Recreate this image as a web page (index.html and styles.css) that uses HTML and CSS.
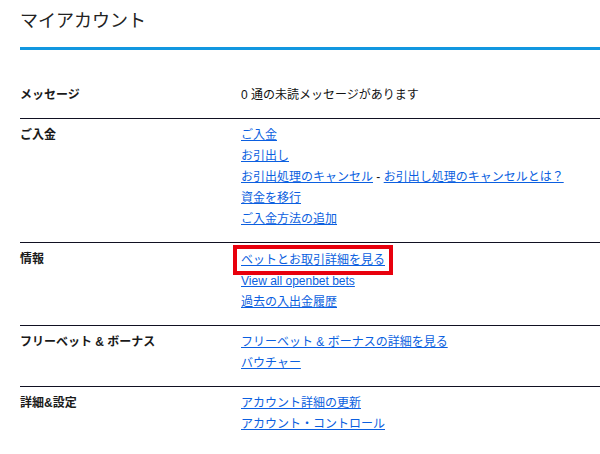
FILE: index.html
```html
<!DOCTYPE html>
<html lang="ja">
<head>
<meta charset="utf-8">
<title>マイアカウント</title>
<link rel="stylesheet" href="styles.css">
</head>
<body>
<div class="page">
  <h1 class="title">マイアカウント</h1>
  <div class="sections">
    <div class="row first">
      <div class="label">メッセージ</div>
      <div class="values"><span class="text">0 通の未読メッセージがあります</span></div>
    </div>
    <div class="row">
      <div class="label">ご入金</div>
      <div class="values">
        <a href="#" class="link">ご入金</a>
        <a href="#" class="link">お引出し</a>
        <div class="line"><a href="#">お引出処理のキャンセル</a><span class="sep">&nbsp;-&nbsp;</span><a href="#">お引出し処理のキャンセルとは？</a></div>
        <a href="#" class="link">資金を移行</a>
        <a href="#" class="link">ご入金方法の追加</a>
      </div>
    </div>
    <div class="row">
      <div class="label">情報</div>
      <div class="values">
        <div class="line-flex"><a href="#" class="highlight">ベットとお取引詳細を見る</a></div>
        <a href="#" class="link">View all openbet bets</a>
        <a href="#" class="link">過去の入出金履歴</a>
      </div>
    </div>
    <div class="row">
      <div class="label">フリーベット &amp; ボーナス</div>
      <div class="values">
        <a href="#" class="link">フリーベット &amp; ボーナスの詳細を見る</a>
        <a href="#" class="link">バウチャー</a>
      </div>
    </div>
    <div class="row">
      <div class="label">詳細&amp;設定</div>
      <div class="values">
        <a href="#" class="link">アカウント詳細の更新</a>
        <a href="#" class="link">アカウント・コントロール</a>
      </div>
    </div>
  </div>
</div>
</body>
</html>
```

FILE: styles.css
```css
html, body {
  margin: 0;
  padding: 0;
  background: #ffffff;
}

body {
  font-family: "Liberation Sans", "Noto Sans CJK JP", sans-serif;
  font-size: 12px;
  color: #111111;
}

.page {
  padding-left: 20px;
}

.title {
  margin: 0;
  padding-top: 9px;
  padding-bottom: 14px;
  font-size: 18px;
  line-height: 24px;
  font-weight: normal;
  color: #222222;
  border-bottom: 3px solid #1297e0;
}

.sections {
  padding-top: 29px;
}

.row {
  display: flex;
  border-top: 1px solid #111122;
  padding: 6px 0 12px 0;
}

.row.first {
  border-top: none;
}

.label {
  width: 221px;
  flex: none;
  font-weight: bold;
  line-height: 21px;
  color: #1a1a1a;
}

.values {
  display: flex;
  flex-direction: column;
  align-items: flex-start;
  line-height: 21px;
}

.values a {
  color: #0b5fe0;
  text-decoration: underline;
}

.link {
  display: block;
}

.sep {
  color: #111111;
}

.line-flex {
  display: flex;
}

.highlight {
  display: block;
  border: 4px solid #e8000d;
  padding: 1px 4px 0 4px;
  margin: -4px 0 -4px -8px;
}
```
